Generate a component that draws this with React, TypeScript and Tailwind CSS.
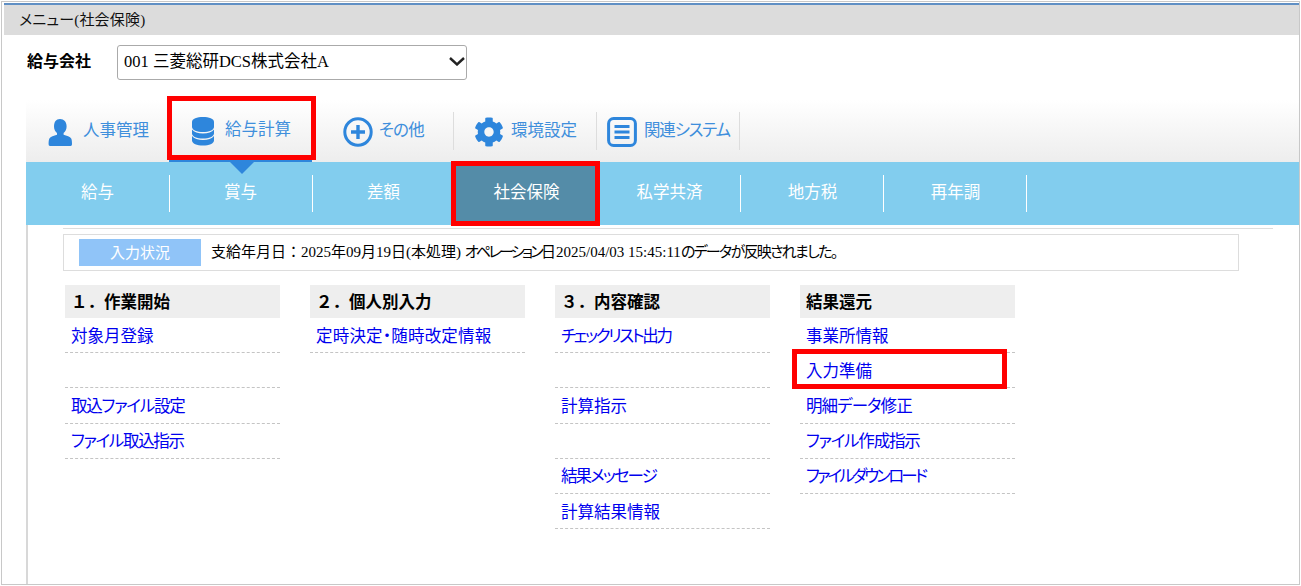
import React from 'react';
import { FaCog } from 'react-icons/fa';

const font = "font-['Liberation_Serif','Noto_Sans_CJK_JP',serif] [font-feature-settings:'palt']";
const gothic = "font-['Noto_Sans_CJK_JP',sans-serif] [font-feature-settings:'palt']";

const mainTabs = [
  { label: '人事管理', icon: 'user', width: 'w-[143px]', pad: 'pl-[22px]', gap: 'gap-[11px]', track: '' },
  { label: '給与計算', icon: 'db', width: 'w-[143px]', pad: 'pl-[22px]', gap: 'gap-[10px]', track: '', active: true },
  { label: 'その他', icon: 'plus', width: 'w-[142px]', pad: 'pl-[31px]', gap: 'gap-[6px]', track: 'tracking-[-0.8px]', sep: true },
  { label: '環境設定', icon: 'gear', width: 'w-[143px]', pad: 'pl-[20px]', gap: 'gap-[7px]', track: '', sep: true },
  { label: '関連システム', icon: 'list', width: 'w-[143px]', pad: 'pl-[10px]', gap: 'gap-[7px]', track: 'tracking-[-1.2px]', sep: true },
];

const subTabs = ['給与', '賞与', '差額', '社会保険', '私学共済', '地方税', '再年調'];

const columns = [
  {
    title: '１．作業開始',
    items: [
      { label: '対象月登録', track: '' },
      { label: '', track: '' },
      { label: '取込ファイル設定', track: 'tracking-[-1.2px]' },
      { label: 'ファイル取込指示', track: 'tracking-[-1.3px]' },
    ],
  },
  {
    title: '２．個人別入力',
    items: [{ label: '定時決定・随時改定情報', track: 'tracking-[0.2px]' }],
  },
  {
    title: '３．内容確認',
    items: [
      { label: 'チェックリスト出力', track: 'tracking-[-2.3px]' },
      { label: '', track: '' },
      { label: '計算指示', track: '' },
      { label: '', track: '' },
      { label: '結果メッセージ', track: 'tracking-[-1.9px]' },
      { label: '計算結果情報', track: '' },
    ],
  },
  {
    title: '結果還元',
    items: [
      { label: '事業所情報', track: '' },
      { label: '入力準備', track: '' },
      { label: '明細データ修正', track: 'tracking-[-0.9px]' },
      { label: 'ファイル作成指示', track: 'tracking-[-1.2px]' },
      { label: 'ファイルダウンロード', track: 'tracking-[-2.8px]' },
    ],
  },
];

function TabIcon({ name }: { name: string }) {
  const color = 'text-[#2e86dc]';
  if (name === 'user') {
    return (
      <svg viewBox="0 0 24 27" className={`h-[27px] w-[24px] ${color}`} fill="currentColor">
        <path d="M12 0c4 0 6.600 3 6.600 7.400 0 2.800-1.200 5.200-3 6.500v1.800c3 .8 6.600 2 7.600 3.800.6 1 .8 3.400.8 5.400 0 1-.5 2-1.400 2H2c-.9 0-1.400-1-1.400-2 0-2 .2-4.400.8-5.400 1-1.800 4.600-3 7.600-3.800v-1.800c-1.800-1.300-3-3.700-3-6.500C6 3 8 0 12 0z" />
      </svg>
    );
  }
  if (name === 'db') {
    return (
      <svg viewBox="0 0 24 30" className={`h-[30px] w-[24px] ${color}`} fill="currentColor">
        <path d="M1 6C1 2.500 6 1 12 1s11 1.500 11 5v5c0 3-5 5-11 5S1 14 1 11z" />
        <path d="M1 13.500c2 2.500 6 4 11 4s9-1.500 11-4v4c0 3-5 5-11 5S1 20.500 1 17.500z" />
        <path d="M1 20c2 2.500 6 4 11 4s9-1.500 11-4v4.500c0 3-5 5-11 5S1 27.500 1 24.500z" />
      </svg>
    );
  }
  if (name === 'plus') {
    return (
      <svg viewBox="0 0 30 30" className={`h-[30px] w-[30px] ${color}`} fill="none" stroke="currentColor">
        <circle cx="15" cy="15" r="13.200" strokeWidth="3" />
        <path d="M15 8v14M8 15h14" strokeWidth="3.400" />
      </svg>
    );
  }
  if (name === 'gear') return <FaCog className={`h-[30px] w-[30px] ${color}`} />;
  return (
    <svg viewBox="0 0 30 30" className={`h-[30px] w-[30px] ${color}`} fill="none" stroke="currentColor">
      <rect x="1.600" y="1.600" width="26.800" height="26.800" rx="5" strokeWidth="3" />
      <path d="M7.500 9.500h15M7.500 15h15M7.500 20.500h15" strokeWidth="3" />
    </svg>
  );
}

export default function App() {
  return (
    <div className={`h-[586px] w-[1301px] overflow-hidden bg-white pl-px pt-px ${font}`}>
      <div className="relative h-[584px] w-[1299px] border border-[#c8c8c8] bg-white">
        <div className="ml-[2px] mt-px flex h-[32px] items-center border-t-2 border-t-[#5f8fc4] bg-[#dcdcdc] pl-[15px] text-[15px] leading-none tracking-[0.2px] text-[#111]">
          メニュー(社会保険)
        </div>

        <div className="flex h-[45px] items-end pl-[25px]">
          <span className={`w-[90px] self-center pt-[5px] text-[16px] font-bold text-black ${gothic}`}>給与会社</span>
          <div className="relative">
            <select className="h-[35px] w-[350px] appearance-none rounded-[3px] border border-[#aaa] bg-white pl-[6px] text-[16.5px] text-black">
              <option>001 三菱総研DCS株式会社A</option>
            </select>
            <svg viewBox="0 0 16 9" className="pointer-events-none absolute right-[2px] top-[12px] h-[9px] w-[16px]" fill="none" stroke="#222" strokeWidth="2.400">
              <path d="M1 1l7 6.500L15 1" />
            </svg>
          </div>
        </div>

        <div className="ml-[24px] mt-[20px]">
          <div className={`flex h-[62px] bg-gradient-to-b from-white to-[#ededed] ${gothic}`}>
            {mainTabs.map((tab) => (
              <div
                key={tab.label}
                className={`relative flex h-full items-center ${tab.width} ${tab.pad} ${tab.gap} pt-[2px] ${tab.active ? 'border-b-2 border-b-[#2e86dc]' : ''}`}
              >
                <TabIcon name={tab.icon} />
                <span className={`pb-[5px] text-[16.5px] text-[#3f8fdc] ${tab.track}`}>{tab.label}</span>
                {tab.sep && <span className="absolute right-0 top-[12px] h-[38px] w-px bg-[#ddd]" />}
              </div>
            ))}
          </div>

          <div className={`flex h-[63px] bg-[#82cdee] ${gothic}`}>
            {subTabs.map((tab, i) => (
              <div
                key={tab}
                className={`relative flex w-[143px] items-center justify-center pb-[4px] text-[16.5px] text-white ${tab === '社会保険' ? 'bg-[#548ca8]' : ''}`}
              >
                {tab}
                {tab !== '差額' && tab !== '社会保険' && (
                  <span className={`absolute top-[13px] h-[37px] w-px bg-white ${i < 2 ? 'right-[-1px]' : 'right-0'}`} />
                )}
                {tab === '賞与' && (
                  <span className="absolute left-[61px] top-0 h-0 w-0 border-x-[12px] border-t-[12px] border-x-transparent border-t-[#2e86dc]" />
                )}
              </div>
            ))}
          </div>
        </div>

        <div className="flex h-[359px]">
          <div className="ml-[24px] w-[2px] bg-[#d8d8d8]" />
          <div className="pl-[35px] pt-[3px]">
            <div className="h-px w-[1210px] bg-[#ddd]" />
            <div className="mt-[5px] flex h-[37px] w-[1176px] items-center border border-[#ddd] pl-[15px] text-[15px] text-black">
              <span className={`flex h-[27px] w-[122px] items-center justify-center bg-[#90c4f8] text-white ${gothic}`}>入力状況</span>
              <span className="ml-[10px]">
                支給年月日<span className="[font-feature-settings:normal]">：</span>2025年09月19日(本処理) <span className="tracking-[-2.700px]">オペレーション</span>日2025/04/03 15:45:11<span className="tracking-[-1.700px]">のデータが反映されました。</span>
              </span>
            </div>
            <div className={`ml-[2px] mt-[14px] flex gap-[30px] ${gothic}`}>
              {columns.map((col) => (
                <div key={col.title} className="w-[215px]">
                  <div className="flex h-[33px] items-center bg-[#eee] pl-[6px] text-[16.5px] font-bold text-black [font-feature-settings:normal]">{col.title}</div>
                  {col.items.map((item, i) => (
                    <div
                      key={i}
                      className={`flex h-[35.2px] items-center border-b border-dashed border-b-[#c4c4c4] pl-[6px] text-[16.5px] text-[#0000ee] ${item.track}`}
                    >
                      {item.label}
                    </div>
                  ))}
                </div>
              ))}
            </div>
          </div>
        </div>

        <div className="absolute left-[165px] top-[94px] h-[64px] w-[149px] border-[5px] border-[#f00]" />
        <div className="absolute left-[449px] top-[159px] h-[65px] w-[149px] border-[5px] border-[#f00]" />
        <div className="absolute left-[790px] top-[347px] h-[40px] w-[215px] border-[5px] border-[#f00]" />
      </div>
    </div>
  );
}
